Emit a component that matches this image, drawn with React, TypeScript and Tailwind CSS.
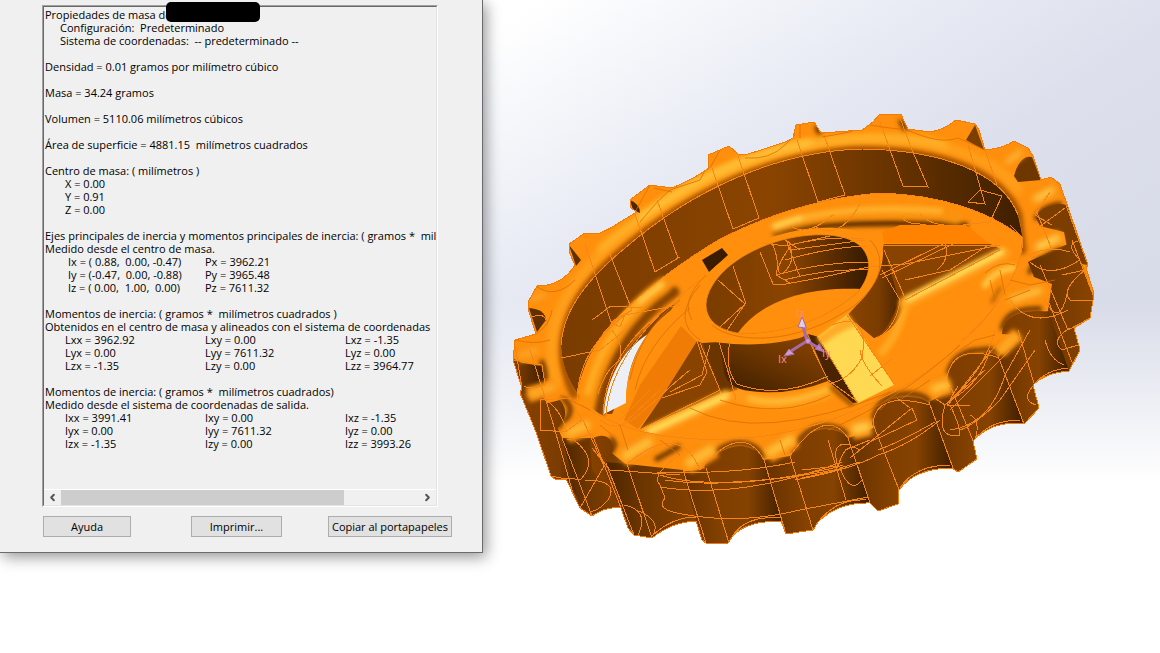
import { ChevronLeft, ChevronRight } from "lucide-react";

const TEXT = "font-['Open_Sans','Noto_Sans',sans-serif] text-[11px] leading-[13px]";

function Line({ children, indent = "pl-0" }: { children?: string; indent?: string }) {
  return <p className={`h-[13px] whitespace-pre ${indent}`}>{children}</p>;
}

function Matrix({ rows, indent }: { rows: string[][]; indent: string }) {
  return (
    <table className={`border-collapse ${indent}`}>
      <tbody>
        {rows.map((row) => (
          <tr key={row[0]} className="h-[13px]">
            {row.map((cell) => (
              <td key={cell} className="w-[140px] min-w-[140px] p-0 whitespace-pre">
                {cell}
              </td>
            ))}
          </tr>
        ))}
      </tbody>
    </table>
  );
}

function Report() {
  return (
    <div className="h-[482px] overflow-hidden pt-px pl-px">
      <Line>Propiedades de masa de</Line>
      <Line indent="pl-[15px]">{"Configuración:  Predeterminado"}</Line>
      <Line indent="pl-[15px]">{"Sistema de coordenadas:  -- predeterminado --"}</Line>
      <Line />
      <Line>Densidad = 0.01 gramos por milímetro cúbico</Line>
      <Line />
      <Line>Masa = 34.24 gramos</Line>
      <Line />
      <Line>Volumen = 5110.06 milímetros cúbicos</Line>
      <Line />
      <Line>{"Área de superficie = 4881.15  milímetros cuadrados"}</Line>
      <Line />
      <Line>Centro de masa: ( milímetros )</Line>
      <Line indent="pl-5">X = 0.00</Line>
      <Line indent="pl-5">Y = 0.91</Line>
      <Line indent="pl-5">Z = 0.00</Line>
      <Line />
      <Line>{"Ejes principales de inercia y momentos principales de inercia: ( gramos *  milímetros cuadrados )"}</Line>
      <Line>Medido desde el centro de masa.</Line>
      <Matrix
        indent="ml-[23px] [&_td:first-child]:w-[137px] [&_td:first-child]:min-w-[137px]"
        rows={[
          ["Ix = ( 0.88,  0.00, -0.47)", "Px = 3962.21"],
          ["Iy = (-0.47,  0.00, -0.88)", "Py = 3965.48"],
          ["Iz = ( 0.00,  1.00,  0.00)", "Pz = 7611.32"],
        ]}
      />
      <Line />
      <Line>{"Momentos de inercia: ( gramos *  milímetros cuadrados )"}</Line>
      <Line>Obtenidos en el centro de masa y alineados con el sistema de coordenadas</Line>
      <Matrix
        indent="ml-5"
        rows={[
          ["Lxx = 3962.92", "Lxy = 0.00", "Lxz = -1.35"],
          ["Lyx = 0.00", "Lyy = 7611.32", "Lyz = 0.00"],
          ["Lzx = -1.35", "Lzy = 0.00", "Lzz = 3964.77"],
        ]}
      />
      <Line />
      <Line>{"Momentos de inercia: ( gramos *  milímetros cuadrados)"}</Line>
      <Line>Medido desde el sistema de coordenadas de salida.</Line>
      <Matrix
        indent="ml-5"
        rows={[
          ["Ixx = 3991.41", "Ixy = 0.00", "Ixz = -1.35"],
          ["Iyx = 0.00", "Iyy = 7611.32", "Iyz = 0.00"],
          ["Izx = -1.35", "Izy = 0.00", "Izz = 3993.26"],
        ]}
      />
    </div>
  );
}

function ScrollBar() {
  return (
    <div className="flex h-4 items-center border-t border-white">
      <button type="button" aria-label="Desplazar a la izquierda" className="flex w-[17px] justify-center text-[#505050]">
        <ChevronLeft size={11} strokeWidth={4} />
      </button>
      <div className="flex flex-1">
        <div className="h-[15px] w-[79%] bg-[#cdcdcd]" />
      </div>
      <button type="button" aria-label="Desplazar a la derecha" className="flex w-[17px] justify-center text-[#505050]">
        <ChevronRight size={11} strokeWidth={4} />
      </button>
    </div>
  );
}

const BUTTON = "h-[21px] border border-[#adadad] bg-[#e1e1e1] text-center whitespace-nowrap text-black";

function Dialog() {
  return (
    <section
      aria-label="Propiedades físicas"
      className={`relative z-10 w-[483px] shrink-0 self-start border-r border-b border-[#6b6b6f] bg-[#f0f0f0] pt-[5px] pb-[15px] text-black shadow-[3px_4px_14px_rgba(0,0,0,0.42)] ${TEXT}`}
    >
      <div className="relative mr-11 ml-[42px] border border-t-[#a0a0a0] border-r-white border-b-white border-l-[#a0a0a0]">
        <div className="border border-t-[#696969] border-r-[#e3e3e3] border-b-[#e3e3e3] border-l-[#696969]">
          <Report />
          <ScrollBar />
        </div>
        <div className="absolute -top-1 left-[123px] h-5 w-[94px] rounded-[5px] bg-black" />
      </div>
      <div className="mt-[9px] flex pl-[43px]">
        <button type="button" className={`w-[88px] ${BUTTON}`}>Ayuda</button>
        <button type="button" className={`ml-[60px] w-[91px] ${BUTTON}`}>Imprimir...</button>
        <button type="button" className={`ml-[46px] w-[124px] ${BUTTON}`}>Copiar al portapapeles</button>
      </div>
    </section>
  );
}

const SILHOUETTE =
  "M569 252L569 244L585 233L600 233Q612 228 620 222L637 212L631 208L630 200L650 185L672 188Q692 180 709 168L708 155L729 146L738 154L748 154Q768 148 785 142L793 138L796 125L814 122L821 133L862 130L873 122L880 114L901 114L904 121L908 129L930 132Q944 130 956 120L975 124L979 130L985 150Q1004 148 1014 141L1028 148L1033 156L1041 180L1051 177L1060 184L1088 265L1086 268L1093 290L1093 300L1090 318L1074 328L1080 350L1069 371Q1045 373 1033 385L1039 408L1024 424Q992 420 973 441L977 459L958 472L952 468Q915 468 899 490L898 504L878 511L870 503Q838 502 818 522L813 530L786 534L781 521Q745 521 732 537L728 543L706 543L702 540L696 521Q672 522 652 538L634 535L628 528L621 508Q606 506 592 516L580 508L566 479L556 480L551 476L536 432L520 393L522 388L513 360L515 340L536 334L529 312L528 302L537 286Q562 286 575 265Z";

const FRONT_WALL =
  "M500 352L520 362L545 398L562 438L600 444L627 465L683 472L706 468L764 462L790 457L848 440L873 428L929 406L950 386L998 360L1018 334L1045 312L1100 296V560H500Z";

const OPENING =
  "M561 345C563 315 580 285 625 248C690 192 775 151 862 149C940 150 1002 172 1018 215C1030 250 1015 288 981 324C930 375 850 418 760 434C690 444 640 437 605 417C575 400 562 372 561 345Z";

const INNER_WALL =
  "M561 345C563 315 580 285 625 248C690 192 775 151 862 149C940 150 1002 172 1018 215L1023 238C990 211 940 195 880 193C830 197 775 211 720 239C660 275 625 307 602 335C584 361 578 383 577 400C566 388 561 365 561 345Z";

const HUB_HOLE = "M706 304C708 280 735 255 775 242C810 231 850 232 863 249C873 262 869 278 858 292C830 317 785 336 737 333C716 329 706 319 706 304Z";

const TOOTH_PANELS: { d: string; fill: string }[] = [
  { d: "M517 362L541 366Q548 385 541 394L520 393Z", fill: "url(#panelA)" },
  { d: "M522 396L540 405L560 400Q572 415 556 430L584 508L566 479L551 476Z", fill: "url(#panelB)" },
  { d: "M562 438L592 438L628 528L580 508Z", fill: "url(#panelC)" },
  { d: "M590 440Q606 430 613 444Q616 452 606 458L634 535L621 508L592 470Z", fill: "url(#panelB)" },
  { d: "M627 464L683 470L705 543L696 521Q672 522 652 538L634 535L606 462Z", fill: "url(#panelC)" },
  { d: "M683 472L706 470L729 543L706 543L696 521Z", fill: "url(#panelD)" },
  { d: "M704 466Q722 446 742 446Q758 448 764 460L784 522Q748 520 730 538Z", fill: "url(#panelV)" },
  { d: "M764 460L790 456L813 530L786 534Z", fill: "url(#panelD)" },
  { d: "M790 456Q805 429 826 429Q842 430 848 438L870 503Q835 502 814 525Z", fill: "url(#panelV)" },
  { d: "M848 438L873 430L900 492L898 504L878 511L870 503Z", fill: "url(#panelD)" },
  { d: "M872 424Q876 398 905 397Q924 396 930 405L953 468Q915 467 899 488Z", fill: "url(#panelV)" },
  { d: "M929 402L952 390L974 443L977 459L958 472L952 467Z", fill: "url(#panelD)" },
  { d: "M947 378Q953 352 982 353Q994 350 999 358L1024 424Q988 421 973 440Z", fill: "url(#panelV)" },
  { d: "M998 358L1016 336L1036 385L1039 408L1024 424Z", fill: "url(#panelD)" },
  { d: "M1002 334Q1003 311 1040 311L1052 312L1070 370Q1046 373 1033 385L1014 335Z", fill: "url(#panelV)" },
  { d: "M1028 262L1060 247L1074 242L1093 295L1090 318L1074 328L1080 350L1069 371L1048 310L1052 284L1034 277Z", fill: "url(#panelD)" },
  { d: "M1036 218Q1040 206 1060 204L1068 205L1088 265L1070 262L1064 232L1040 226Z", fill: "#7b3d00" },
  { d: "M1014 176Q1020 154 1032 157L1041 180L1018 182Z", fill: "#6f3700" },
  { d: "M966 140L975 125L984 150Z", fill: "#7d3f00" },
  { d: "M630 200Q640 204 640 213L633 210Z", fill: "#4b2500" },
  { d: "M569 245L581 260L576 266Z", fill: "#5e2f00" },
  { d: "M529 308Q545 309 546 320L537 332Z", fill: "#5e2f00" },
];

const KNOBS: { d: string; w: number; c: string }[] = [
  { d: "M519 356L538 350", w: 14, c: "#ffa826" },
  { d: "M530 300L546 294", w: 12, c: "#ffa826" },
  { d: "M528 395L556 386", w: 15, c: "#ffae2a" },
  { d: "M566 434L590 424", w: 20, c: "#ffb830" },
  { d: "M622 458L652 440", w: 20, c: "#ffbe38" },
  { d: "M686 465L714 448", w: 20, c: "#ffbc34" },
  { d: "M767 454L794 438", w: 20, c: "#ffc038" },
  { d: "M852 430L870 426", w: 20, c: "#ffcc48" },
  { d: "M931 390L950 384", w: 20, c: "#ffc038" },
  { d: "M999 352L1018 334", w: 14, c: "#ffb22c" },
  { d: "M1010 300L1042 290", w: 14, c: "#ffc440" },
  { d: "M1036 248L1060 237", w: 15, c: "#ffd24e" },
  { d: "M1034 200L1054 189", w: 14, c: "#ffcc48" },
  { d: "M1006 163L1022 151", w: 12, c: "#ffb730" },
];

const WIRES: string[] = [
  "M561 345C563 315 580 285 625 248C690 192 775 151 862 149C940 150 1002 172 1018 215",
  "M1023 238C990 211 940 195 880 193C830 197 775 211 720 239C660 275 625 307 602 335",
  "M635 214L655 272L678 258L657 200", "M712 168L733 229L759 218L738 156", "M797 140L818 202L845 195L824 135",
  "M880 122L903 186L928 187L912 150L900 118", "M968 145L985 204L968 202L980 190L1002 196L990 222M985 150L997 185",
  "M585 244L611 322L632 310L609 252", "M592 320L611 306L643 308M561 358L600 350L625 330",
  "M611 322L620 327L625 315L680 305", "M655 272L680 257",
  "M790 225Q805 239 834 214M814 226Q839 242 860 204M902 215Q903 225 926 224M920 214Q932 228 963 225L990 222",
  "M1010 225L1023 238C1022 275 990 318 960 342",
  "M603 415C605 370 630 330 680 300M606 414C610 370 640 325 700 280",
  "M577 402C577 365 595 335 632 310M612 330Q624 345 620 360Q605 370 598 394",
  "M760 252L773 284L786 284L824 277L868 267L905 264L1000 245",
  "M772 243Q780 260 776 275L790 283M785 237L800 277M790 250L865 240M785 260Q830 247 867 246M785 246Q830 235 863 239",
  "M718 280L745 304L726 332M733 266L746 304M745 304L720 327",
  "M788 241Q798 262 782 274Q772 272 790 247M785 240L800 250M763 243L786 246L830 236M776 275Q820 262 869 262M784 280Q830 268 868 270",
  "M730 341Q724 370 737 384Q780 400 828 376M719 342L730 378L736 400M806 335L828 380L858 402",
  "M847 315L895 385M818 337L857 402M832 325Q870 310 862 358Q850 380 828 384M870 376L893 358M860 350Q862 365 882 386",
  "M882 270L900 300Q897 325 878 338M884 250L905 298M884 245L930 245L1000 246M905 280L950 270L987 246",
  "M880 275L945 243M882 278L955 243M945 243Q950 260 937 270M905 300L1000 250M700 343L720 390L645 427M697 341L707 372L700 385L662 398M710 345L702 375L670 392",
  "M582 405C640 447 745 447 818 424C900 398 960 355 1000 300",
  "M600 420C625 440 640 410 690 370M620 420L650 390M622 425L660 390",
  "M515 346L522 388M530 350L552 420L575 500M520 393L551 476L566 479",
  "M562 438L592 516M567 440L592 434L621 508M583 420L604 466L580 508",
  "M606 463L634 535M627 464L652 538M592 448L610 470L680 475M540 400L570 398L582 420L565 432L540 430Z",
  "M683 470L706 543M706 468L729 543M680 455Q650 475 660 485L665 498Q655 510 682 514",
  "M764 460L786 534M790 456L813 530M848 438L870 503M873 424L900 492",
  "M929 402L953 468M947 378L974 443M998 356L1024 424M1018 330L1039 400M1048 300L1075 370",
  "M1056 178L1088 265M1036 210L1052 250M1072 240L1093 295M1040 265L1068 330L1090 318",
  "M627 464Q680 420 700 470Q742 420 764 460M790 456Q826 405 848 438M873 424Q876 390 930 405M947 378Q953 342 999 358",
  "M574 440Q600 460 580 480Q560 475 552 485M585 480Q620 480 608 500Q600 510 590 512M624 505Q650 510 638 535M636 510Q662 520 653 535",
  "M660 475Q700 488 780 478Q830 470 843 465M665 480Q730 490 845 468M660 487Q740 500 842 462M656 472Q735 475 795 462",
  "M682 514Q740 525 800 510L868 497M795 480Q850 470 878 455Q910 445 940 420",
  "M838 468Q830 440 850 445M840 468Q850 495 862 480M840 468L860 462M838 470L802 478M838 466L802 470M828 440L846 500M838 467Q845 440 860 450",
  "M845 450L870 440M850 458L912 408L917 420L870 442M878 450Q900 442 935 422M897 398L910 408",
  "M945 405Q935 440 960 435Q960 425 950 405M945 405L985 370M948 405L1000 340M950 410L1010 350M950 430Q990 425 1005 375L1030 330",
  "M945 405L930 395M947 405L958 386M947 406L970 405M950 400Q980 385 990 350M950 400Q985 370 995 330",
  "M960 430Q975 425 1000 400L1035 350M974 443Q982 420 970 415",
  "M732 537Q745 515 781 518M652 536Q672 517 696 517M816 525Q835 498 866 500M900 488Q915 465 950 465M974 440Q990 420 1020 420M1034 385Q1045 370 1068 368",
  "M1030 262Q1050 280 1080 260Q1060 240 1088 240M1030 255Q1050 245 1070 252M1035 230L1065 208M1038 217L1052 225L1035 215L1050 192",
  "M1062 275L1085 270Q1060 290 1070 300L1093 300M1045 300Q1060 330 1068 290",
  "M1070 328Q1050 340 1062 350L1078 345M1034 385Q1020 400 1036 405M1045 340Q1050 360 1064 365M1010 300Q1030 330 1068 310",
  "M530 318Q545 310 548 325M514 360L542 365L545 385Q530 390 524 386M540 395Q562 410 566 430",
];

const CONTOURS: string[] = [
  "M640 222Q660 198 670 190L700 180L708 165M745 158Q770 160 785 145L795 135M822 137L850 132L873 122M905 129Q940 145 958 138L985 150",
  "M635 212L650 185M654 188L672 192M710 168L720 150M800 138L800 125M870 125Q900 130 905 129",
  "M680 300Q640 330 630 380M690 308Q645 345 635 390M706 275Q680 300 692 320M700 285Q670 320 700 340",
  "M712 325C735 345 800 345 855 305C885 280 885 255 870 240",
  "M828 430Q900 400 960 345M720 400Q780 420 830 395M690 408Q760 445 890 392",
  "M536 286Q555 300 575 280M536 334Q550 325 552 310M515 340Q535 345 550 340M560 395L590 410",
  "M985 273Q1000 260 1015 265M990 280L995 300M1000 270L1005 295M1010 280L1030 285L1055 280M1005 300L1030 290",
  "M600 425L612 435M620 425L628 450M660 440L680 455M780 440L785 455M880 410L890 400M900 400L930 380M960 350L975 340L995 335",
];

function Wheel() {
  return (
    <svg viewBox="483 0 677 653" preserveAspectRatio="xMinYMin meet" className="block w-full" role="img" aria-label="Rueda dentada">
      <defs>
        <clipPath id="body"><path d={SILHOUETTE} /></clipPath>
        <clipPath id="opening"><path d={OPENING} /></clipPath>
        <clipPath id="hubHole"><path d={HUB_HOLE} /></clipPath>
        <filter id="soft" x="-50%" y="-80%" width="200%" height="260%"><feGaussianBlur stdDeviation="2" /></filter>
        <filter id="softer" x="-50%" y="-80%" width="200%" height="260%"><feGaussianBlur stdDeviation="3" /></filter>
        <linearGradient id="panelA"><stop offset="0" stopColor="#7a3c00" /><stop offset="1" stopColor="#3f1f00" /></linearGradient>
        <linearGradient id="panelB"><stop offset="0" stopColor="#854100" /><stop offset=".6" stopColor="#7b3c00" /><stop offset="1" stopColor="#3f1f00" /></linearGradient>
        <linearGradient id="panelC"><stop offset="0" stopColor="#4a2400" /><stop offset=".35" stopColor="#6b3500" /><stop offset="1" stopColor="#8a4400" /></linearGradient>
        <linearGradient id="panelD"><stop offset="0" stopColor="#643100" /><stop offset="1" stopColor="#8a4400" /></linearGradient>
        <linearGradient id="panelV"><stop offset="0" stopColor="#7d3d00" /><stop offset=".55" stopColor="#854200" /><stop offset="1" stopColor="#3c1d00" /></linearGradient>
        <linearGradient id="wall"><stop offset="0" stopColor="#7a3c00" /><stop offset=".45" stopColor="#8a4400" /><stop offset=".62" stopColor="#753a00" /><stop offset="1" stopColor="#3f1f00" /></linearGradient>
        <linearGradient id="hub"><stop offset="0" stopColor="#7a3c00" /><stop offset=".5" stopColor="#8a4400" /><stop offset="1" stopColor="#351a00" /></linearGradient>
        <linearGradient id="hubFront" x1="0" y1="1" x2=".8" y2="0"><stop offset="0" stopColor="#3a1c00" /><stop offset=".5" stopColor="#653200" /><stop offset="1" stopColor="#8a4400" /></linearGradient>
        <linearGradient id="pocket"><stop offset="0" stopColor="#8a4400" /><stop offset=".6" stopColor="#7a3c00" /><stop offset="1" stopColor="#4d2600" /></linearGradient>
      </defs>

      <path d={SILHOUETTE} fill="#ff8f0c" />
      <g clipPath="url(#body)">
        <path d={FRONT_WALL} fill="#7d3e00" />
        {/* rim: shaded inner edge, then the band of light along its crown */}
        <g fill="none" strokeLinecap="round">
          <path d="M574 394C550 345 563 298 625 248C690 192 775 151 862 149C940 150 1002 172 1018 215L1022 250" stroke="#a85400" strokeWidth="9" filter="url(#soft)" />
          <path d="M556 382C540 330 566 282 616 240C684 184 772 142 862 139C935 139 996 156 1018 190" stroke="#ffa01c" strokeWidth="9" filter="url(#softer)" />
          <path d="M600 249C680 182 772 142 862 138C900 137 925 140 945 145" stroke="#ffb52c" strokeWidth="6" filter="url(#softer)" />
          <path d="M640 217C700 173 760 150 810 142" stroke="#ffc940" strokeWidth="5" filter="url(#softer)" />
        </g>
        <g filter="url(#soft)" fill="none" stroke="#6b3500" strokeWidth="5">
          <path d="M704 464Q722 442 742 443Q758 445 764 458M792 452Q805 426 826 426Q842 427 848 436M873 420Q878 395 905 394Q924 393 930 402M948 374Q954 350 982 350Q994 347 999 355M655 460L680 446" />
          <path d="M541 360Q550 380 540 390M562 398Q580 410 558 428M610 438Q622 448 602 457M1002 330Q1006 307 1042 309M1030 274Q1030 262 1060 248M1036 220Q1040 206 1062 204M900 120L906 130M816 126L820 134" />
        </g>
        {TOOTH_PANELS.map((p) => (
          <path key={p.d} d={p.d} fill={p.fill} />
        ))}
        <g filter="url(#soft)" fill="none">
          {KNOBS.map((k) => (
            <path key={k.d} d={k.d} stroke="#f98a0c" strokeWidth={k.w} />
          ))}
        </g>
        <g filter="url(#softer)" fill="none">
          {KNOBS.map((k) => (
            <path key={k.d} d={k.d} stroke={k.c} strokeWidth={k.w / 2} />
          ))}
        </g>
      </g>

      <path d={OPENING} fill="#ff8f0c" />
      <g clipPath="url(#opening)">
        <path d={INNER_WALL} fill="url(#wall)" />
        {/* rounded lip around the web */}
        <g fill="none" filter="url(#soft)" strokeLinecap="round">
          <path d="M775 233C820 222 900 222 965 225" stroke="#5a2c00" strokeWidth="6" />
          <path d="M774 226C820 212 900 205 956 217" stroke="#fb920f" strokeWidth="14" />
          <path d="M774 226C820 210 880 206 940 211" stroke="#ffb02a" strokeWidth="6" />
          <path d="M776 226L800 218" stroke="#ffd24c" strokeWidth="5" />
          <path d="M674 292C640 315 608 360 599 412" stroke="#8a4500" strokeWidth="11" />
          <path d="M664 285C628 310 595 355 586 412" stroke="#fb920f" strokeWidth="15" />
          <path d="M660 286C630 306 600 344 588 392" stroke="#ffab24" strokeWidth="7" />
          <path d="M662 284L640 301" stroke="#ffca44" strokeWidth="5" />
        </g>
        <path d="M676 302C640 328 610 365 604 414L612 414L650 334L668 315Z" fill="#8a4400" />
        <path d="M604 414C606 380 622 350 648 334C634 352 626 375 626 403Z" fill="#eceff6" />
        <path d="M626 403C625 365 645 325 680 304L702 310L697 342L640 428L612 420Z" fill="#ff8f0c" />
        <path d="M681 326L697 342L660 400L638 429L624 420L640 385Z" fill="#f07c05" />
        <path d="M697 341L702 343L721 387L720 394L640 429L660 400Z" fill="#884300" />
        <path d="M702 343L719 342L738 390L722 394Z" fill="#6b3500" />
        <path d="M702 260L722 248L728 255L709 272Z" fill="#3a1d00" />
        {/* pocket to the right of the hub */}
        <path d="M884 244L990 244L1003 250L906 302Q898 330 874 338L847 316L870 294Z" fill="#884300" />
        <path d="M882 232L900 225H966L990 244L884 243Z" fill="#ff8200" />
        <path d="M884 250L899 300Q890 330 874 338L848 315L878 280Z" fill="url(#pocket)" />
        <g fill="none" filter="url(#soft)" strokeLinecap="round">
          <path d="M905 303L1004 253" stroke="#ff9f1c" strokeWidth="13" />
          <path d="M908 299L1001 252" stroke="#ffdc55" strokeWidth="6" />
          <path d="M648 433L726 396" stroke="#ff9f1c" strokeWidth="13" />
          <path d="M650 431L726 396" stroke="#ffdc55" strokeWidth="6" />
          <path d="M738 395Q780 411 828 392" stroke="#ff9a18" strokeWidth="14" />
          <path d="M750 399Q785 407 826 390" stroke="#ffb830" strokeWidth="6" />
          <path d="M905 306Q898 335 882 352" stroke="#ffa820" strokeWidth="8" />
          <path d="M985 285Q995 270 1013 268" stroke="#ffc23c" strokeWidth="7" />
          <path d="M992 302L1000 288" stroke="#a85a00" strokeWidth="3" />
          <path d="M832 388L852 404" stroke="#9a4e00" strokeWidth="5" />
        </g>
        {/* hub */}
        <path d="M718 338L724 372Q728 389 750 391Q790 396 828 381L806 332Z" fill="url(#hubFront)" />
        <path d="M697 298C700 268 740 245 790 232C830 222 880 230 883 250C884 278 864 303 838 320L800 338C750 350 718 342 702 340C696 330 696 310 697 298Z" fill="#ff8f0c" />
        <path d={HUB_HOLE} fill="url(#hub)" />
        <g clipPath="url(#hubHole)">
          <path d="M736 336C755 305 800 286 862 289L850 345H740Z" fill="#ff8f0c" />
        </g>
        <path d="M808 334L819 337L859 402L853 403L828 381Z" fill="#4a2400" />
        <path d="M817 337L848 314L894 385L858 403Z" fill="#ffd951" />
        <path d="M817 337L848 314L856 326Q835 333 822 346Z" fill="#ffab25" filter="url(#soft)" />
      </g>

      <g fill="none" stroke="#f58614" strokeWidth="1" shapeRendering="crispEdges" clipPath="url(#body)">
        {WIRES.map((d) => <path key={d} d={d} />)}
      </g>
      <g fill="none" stroke="#d66d00" strokeOpacity=".75" strokeWidth="1" clipPath="url(#body)">
        {CONTOURS.map((d) => <path key={d} d={d} />)}
        <path d={HUB_HOLE} stroke="#f78b10" />
      </g>
      <path d={SILHOUETTE} fill="none" stroke="#ef7d08" strokeWidth="1" shapeRendering="crispEdges" />

      {/* principal axes triad */}
      <g stroke="#a86aa8" strokeWidth="3" fill="#b983bd" strokeLinecap="round">
        <path d="M807 341L803 326M807 341L791 351M807 341L817 347" fill="none" />
        <path d="M802 317L798 327L806 328Z" fill="#ddd0e4" strokeWidth="1" />
        <path d="M784 356L789 349L794 354Z" fill="#c9a0cc" strokeWidth="1" />
        <path d="M824 352L815 349L819 344Z" strokeWidth="1" />
        <circle cx="808" cy="341" r="2.5" fill="#c9a0cc" strokeWidth="1" />
      </g>
      <g fill="#ff8b8b" fontFamily="'Open Sans', sans-serif" fontSize="11">
        <text x="796" y="317">Iz</text>
        <text x="778" y="363">Ix</text>
        <text x="822" y="357">Iy</text>
      </g>
    </svg>
  );
}

export default function App() {
  return (
    <main className="flex min-h-screen items-start overflow-hidden bg-white bg-[linear-gradient(180deg,rgba(255,255,255,0)_46%,rgba(255,255,255,1)_74%),linear-gradient(147deg,#ffffff_25%,#e8ebf4_43%,#dde0ec_56%,#d8dbe8_72%)]">
      <Dialog />
      <div className="min-w-0 flex-1">
        <Wheel />
      </div>
    </main>
  );
}
